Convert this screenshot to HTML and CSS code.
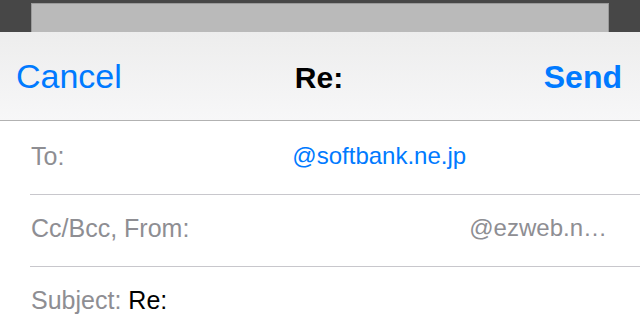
FILE: index.html
```html
<!DOCTYPE html>
<html lang="ja">
<head>
<meta charset="utf-8">
<title>Re:</title>
<link rel="stylesheet" href="styles.css">
</head>
<body>
<div class="screen">
  <div class="backdrop">
    <div class="sheet-behind"></div>
  </div>
  <header class="navbar">
    <span class="nav-btn cancel">Cancel</span>
    <span class="nav-title">Re:</span>
    <span class="nav-btn send">Send</span>
  </header>
  <div class="fields">
    <div class="row">
      <span class="label">To:</span>
      <span class="recipient">@softbank.ne.jp</span>
    </div>
    <div class="row row-split">
      <span class="label">Cc/Bcc, From:</span>
      <span class="from">@ezweb.n…</span>
    </div>
    <div class="row">
      <span class="label">Subject:</span>
      <span class="subject">Re:</span>
    </div>
  </div>
</div>
</body>
</html>
```

FILE: styles.css
```css
html, body {
  margin: 0;
  padding: 0;
  background: #ffffff;
}

.screen {
  width: 640px;
  height: 336px;
  overflow: hidden;
  font-family: "Liberation Sans", Arial, sans-serif;
  background: #ffffff;
}

.backdrop {
  height: 32px;
  box-sizing: border-box;
  background: #474747;
  padding: 3px 31px 0 31px;
  display: flex;
}

.sheet-behind {
  flex: 1;
  background: #bababa;
  border: 1px solid #9a9a9a;
  border-bottom: none;
}

.navbar {
  height: 89px;
  box-sizing: border-box;
  border-bottom: 1px solid #b2b2b2;
  background: linear-gradient(#ededed, #f7f7f8);
  display: grid;
  grid-template-columns: 1fr auto 1fr;
  align-items: baseline;
  padding: 24px 18px 0 16px;
}

.nav-btn {
  color: #007aff;
  line-height: 40px;
}

.cancel {
  font-size: 34px;
  justify-self: start;
}

.send {
  font-size: 32px;
  font-weight: bold;
  justify-self: end;
}

.nav-title {
  font-size: 30px;
  font-weight: bold;
  color: #000000;
  line-height: 40px;
  justify-self: center;
}

.fields {
  padding-top: 2px;
}

.row {
  height: 72px;
  box-sizing: border-box;
  margin-left: 30px;
  padding: 0 33px 5px 1px;
  border-bottom: 1px solid #c8c7cc;
  display: flex;
  align-items: center;
  font-size: 24px;
  white-space: nowrap;
}

.row:last-child {
  border-bottom: none;
}

.row-split {
  justify-content: space-between;
}

.label {
  color: #8e8e93;
  font-size: 25px;
}

.recipient {
  color: #007aff;
  margin-left: 228px;
}

.from {
  color: #8e8e93;
}

.subject {
  color: #000000;
  font-size: 25px;
  margin-left: 7px;
}
```
